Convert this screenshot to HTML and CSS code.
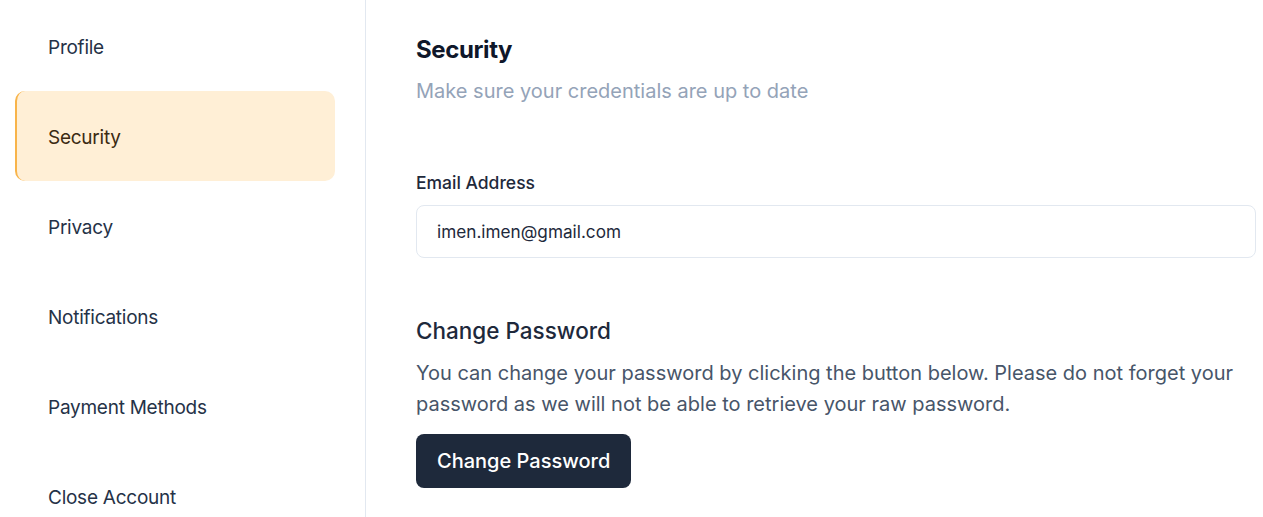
FILE: index.html
```html
<!DOCTYPE html>
<html lang="en">
<head>
<meta charset="utf-8">
<title>Security settings</title>
<link rel="stylesheet" href="styles.css">
</head>
<body>
<div class="layout">
  <nav class="sidebar">
    <a class="nav-item">Profile</a>
    <a class="nav-item active">Security</a>
    <a class="nav-item">Privacy</a>
    <a class="nav-item">Notifications</a>
    <a class="nav-item">Payment Methods</a>
    <a class="nav-item">Close Account</a>
  </nav>
  <main class="content">
    <h1 class="title">Security</h1>
    <p class="subtitle">Make sure your credentials are up to date</p>
    <label class="label">Email Address</label>
    <div class="input">imen.imen@gmail.com</div>
    <h2 class="section-title">Change Password</h2>
    <p class="desc">You can change your password by clicking the button below. Please do not forget your password as we will not be able to retrieve your raw password.</p>
    <button class="btn">Change Password</button>
  </main>
</div>
</body>
</html>
```
FILE: styles.css
```css
* { box-sizing: border-box; }
html, body { margin: 0; padding: 0; background: #fff; }
body { font-family: Inter, "Noto Sans", sans-serif; color: #1e293b; }
.layout { display: flex; height: 517px; overflow: hidden; }
.sidebar {
  width: 366px;
  flex-shrink: 0;
  border-right: 1px solid #e2e8f0;
  padding: 1px 30px 0 15px;
  display: flex;
  flex-direction: column;
}
.nav-item {
  height: 90px;
  flex-shrink: 0;
  display: flex;
  align-items: center;
  padding: 2px 0 0 33px;
  font-size: 19px;
  color: #253247;
  border-radius: 10px;
  letter-spacing: -0.25px;
}
.nav-item.active {
  background: #ffefd6;
  border-left: 2px solid #f8b44a;
  padding-left: 31px;
  color: #3b2a12;
}
.content {
  flex: 1;
  padding: 34px 7px 0 50px;
  display: flex;
  flex-direction: column;
  align-items: flex-start;
}
.title { margin: 0; font-size: 24px; line-height: 32px; font-weight: 700; color: #0f172a; letter-spacing: -0.4px; }
.subtitle { margin: 11px 0 0; font-size: 20px; line-height: 28px; color: #94a3b8; }
.label { margin-top: 66px; font-size: 17.5px; line-height: 24px; font-weight: 500; color: #1e293b; }
.input {
  margin-top: 10px;
  width: 100%;
  height: 53px;
  border: 1px solid #e2e8f0;
  border-radius: 8px;
  padding: 0 20px;
  display: flex;
  align-items: center;
  font-size: 17.2px;
  color: #1e293b;
}
.section-title { margin: 57px 0 0; font-size: 22.5px; line-height: 32px; font-weight: 500; color: #1e293b; }
.desc { margin: 11px 0 0; font-size: 20px; line-height: 31px; color: #475569; }
.btn {
  margin-top: 14px;
  height: 54px;
  padding: 0 21px;
  border: none;
  border-radius: 8px;
  background: #1e293b;
  color: #fff;
  font-family: inherit;
  font-size: 20px;
  font-weight: 500;
}
```
